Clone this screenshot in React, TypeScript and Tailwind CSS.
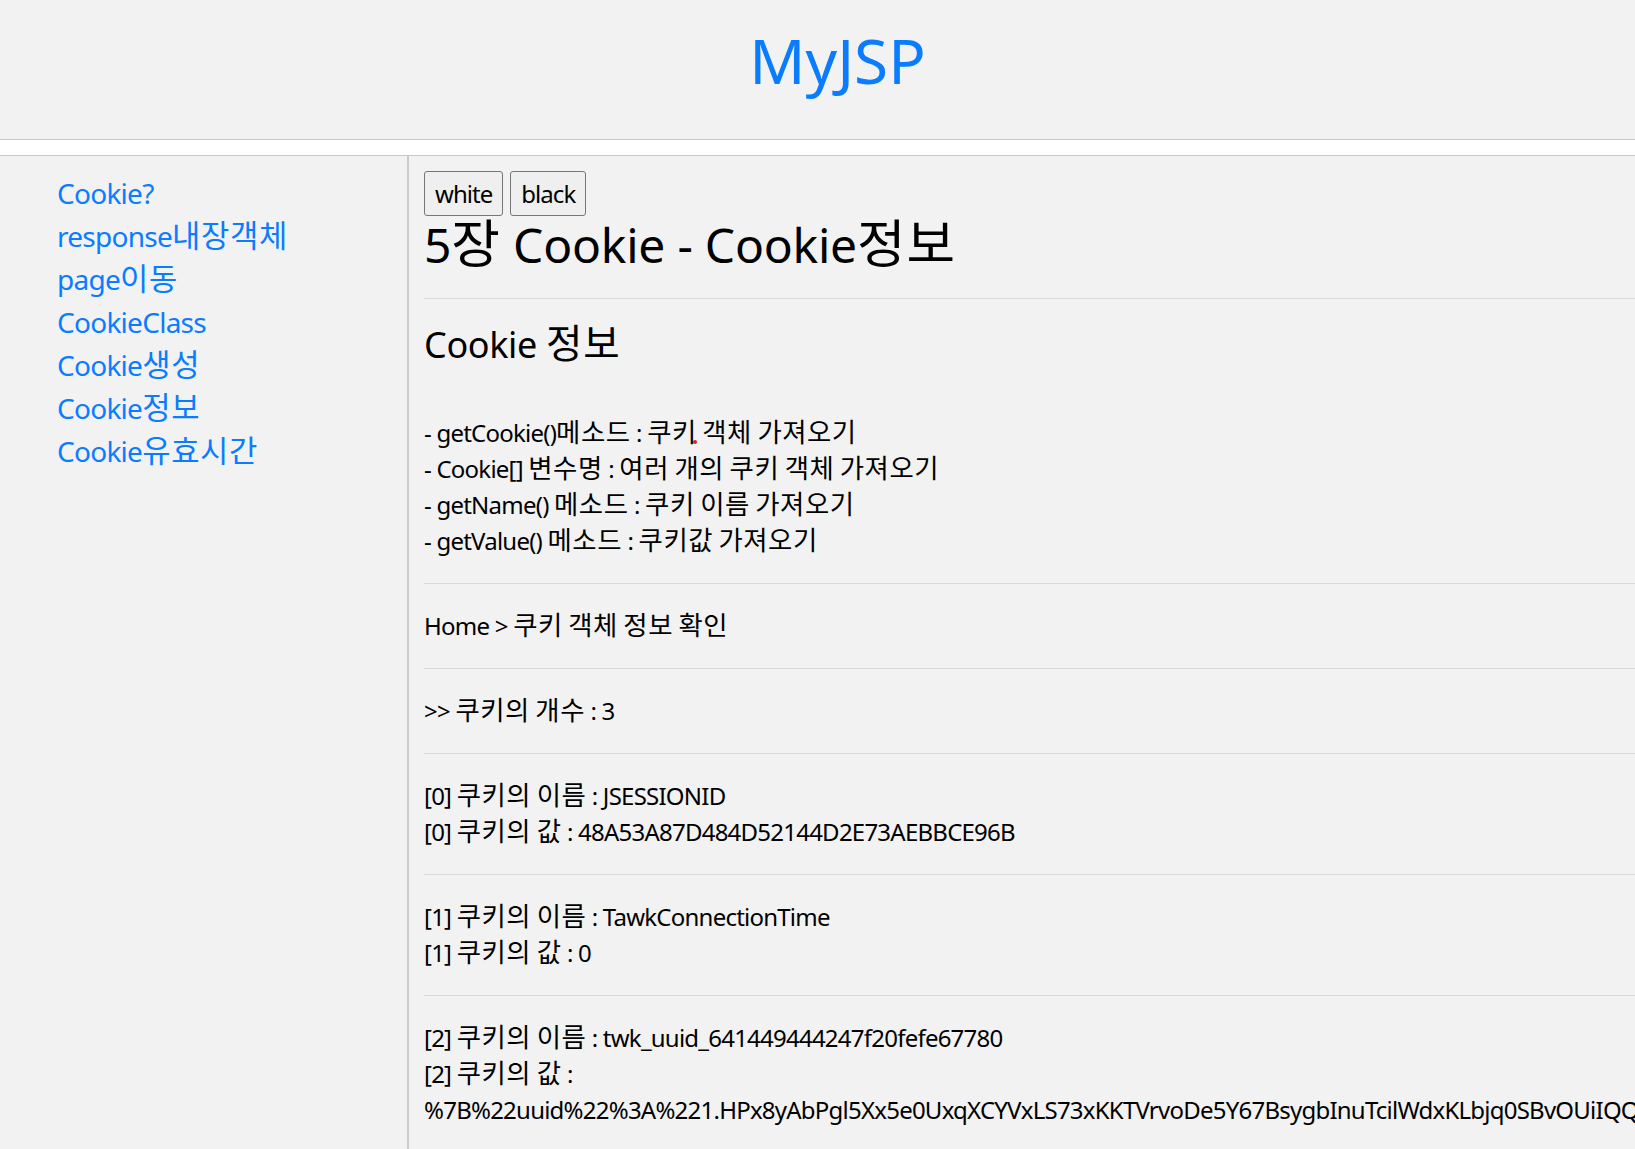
import React from "react";

const font = { fontFamily: '"Noto Sans", "Noto Sans CJK KR", sans-serif' };

const HANGUL = /([\u1100-\u11FF\u3130-\u318F\uAC00-\uD7AF]+)/;

function K({ t }: { t: string }) {
  const parts = t.split(HANGUL);
  return (
    <>
      {parts.map((p, i) =>
        i % 2 === 1 ? (
          <span key={i} className="text-[1.1em] leading-[0] tracking-[0.02em]">
            {p}
          </span>
        ) : (
          <React.Fragment key={i}>{p}</React.Fragment>
        )
      )}
    </>
  );
}

const links = [
  "Cookie?",
  "response내장객체",
  "page이동",
  "CookieClass",
  "Cookie생성",
  "Cookie정보",
  "Cookie유효시간",
];

const hr = "border-t border-[#d9d9d9]";

export default function App() {
  return (
    <div
      className="h-screen w-full overflow-hidden flex flex-col bg-[#f2f2f2] text-black tracking-[-0.048em]"
      style={font}
    >
      <header className="h-[140px] shrink-0 border-b border-[#c8c8c8] pt-[24px] pl-[40px] text-center">
        <h1 className="text-[62px] leading-[72px] font-normal tracking-normal text-[#0a7cff]">MyJSP</h1>
      </header>
      <div className="h-[16px] shrink-0 bg-white border-b border-[#c8c8c8]" />
      <div className="flex flex-1 min-h-0">
        <nav className="w-[409px] shrink-0 border-r-2 border-[#cccccc] pl-[57px] pt-[16px]">
          <ul className="flex flex-col">
            {links.map((l) => (
              <li key={l} className="text-[28px] leading-[43px] tracking-[-0.026em]">
                <a href="#" className="text-[#0a7cff]">
                  <K t={l} />
                </a>
              </li>
            ))}
          </ul>
        </nav>
        <main className="flex-1 min-w-0 pl-[15px] pt-[15px] text-[24px] leading-[36px]">
          <div className="flex gap-[7px]">
            <button className="h-[45px] pt-[1px] px-[10px] border border-[#767676] rounded-[3px] bg-[#efefef] text-[24px] leading-[32px] tracking-[-0.04em]">
              white
            </button>
            <button className="h-[45px] pt-[1px] px-[10px] border border-[#767676] rounded-[3px] bg-[#efefef] text-[24px] leading-[32px] tracking-[-0.04em]">
              black
            </button>
          </div>
          <h1 className="mt-[1px] text-[48px] leading-[56px] font-normal tracking-[-0.005em]">
            <K t="5장 Cookie - Cookie정보" />
          </h1>
          <div className={`mt-[25px] ${hr} pt-[24px] pb-[24px]`}>
            <h2 className="text-[36px] leading-[44px] font-normal tracking-[-0.01em]">
              <K t="Cookie 정보" />
            </h2>
            <div className="mt-[48px]">
              <p>
                <K t="- getCookie()메소드 : " />
                <span className="relative">
                  <K t="쿠키" />
                  <span className="absolute right-[0px] bottom-[5px] w-[4px] h-[4px] rounded-full bg-[#e02020]" />
                </span>
                <K t=" 객체 가져오기" />
              </p>
              <p>
                <K t="- Cookie[] 변수명 : 여러 개의 쿠키 객체 가져오기" />
              </p>
              <p>
                <K t="- getName() 메소드 : 쿠키 이름 가져오기" />
              </p>
              <p>
                <K t="- getValue() 메소드 : 쿠키값 가져오기" />
              </p>
            </div>
          </div>
          <div className={`${hr} py-[24px]`}>
            <p>
              <K t="Home > 쿠키 객체 정보 확인" />
            </p>
          </div>
          <div className={`${hr} py-[24px]`}>
            <p>
              <K t=">> 쿠키의 개수 : 3" />
            </p>
          </div>
          <div className={`${hr} py-[24px]`}>
            <p>
              <K t="[0] 쿠키의 이름 : JSESSIONID" />
            </p>
            <p>
              <K t="[0] 쿠키의 값 : 48A53A87D484D52144D2E73AEBBCE96B" />
            </p>
          </div>
          <div className={`${hr} py-[24px]`}>
            <p>
              <K t="[1] 쿠키의 이름 : TawkConnectionTime" />
            </p>
            <p>
              <K t="[1] 쿠키의 값 : 0" />
            </p>
          </div>
          <div className={`${hr} py-[24px]`}>
            <p>
              <K t="[2] 쿠키의 이름 : twk_uuid_641449444247f20fefe67780" />
            </p>
            <p>
              <K t="[2] 쿠키의 값 : " />
              %7B%22uuid%22%3A%221.HPx8yAbPgl5Xx5e0UxqXCYVxLS73xKKTVrvoDe5Y67BsygbInuTcilWdxKLbjq0SBvOUiIQQ7lrJ0yQ2Hc6Nz%22%2C%22version%22%3A3%2C%22domain%22%3A%22localhost%22%7D
            </p>
          </div>
        </main>
      </div>
    </div>
  );
}
